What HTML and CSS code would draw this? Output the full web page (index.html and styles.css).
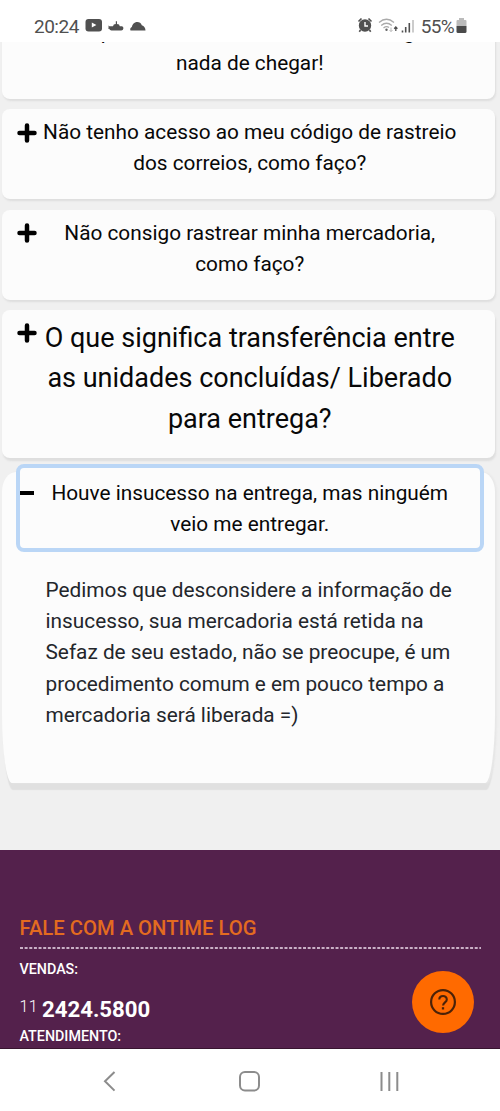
FILE: index.html
```html
<!DOCTYPE html>
<html lang="pt-BR">
<head>
<meta charset="utf-8">
<title>Ontime Log</title>
<link rel="stylesheet" href="styles.css">
</head>
<body>
<div class="phone">
  <header class="status">
    <span class="clock">20:24</span>
    <svg class="s-left" width="62" height="16" viewBox="0 0 62 16" fill="#505050">
      <rect x="0.5" y="2" width="16.5" height="12.5" rx="3"/>
      <path d="M6.800 5.400v5.200l4.600-2.600z" fill="#fff"/>
      <path d="M23 8.500l1.500.8h3.500l.8-1.800 2-.5V4.200h1.200V7l2 .5.8 1.800h2.200q1.600.2 1.400 2.200-.3 1.900-2.200 1.900H26.500q-1.800 0-2.300-1.600l-1.200-.3.800-1.500z"/>
      <path d="M45.500 13.500q-1-2.400 1.300-3.500.8-4 4.500-5 4-.6 5.500 3.200 3.600 1.200 3.700 5.300z"/>
    </svg>
    <span class="grow"></span>
    <svg class="s-right" width="58" height="18" viewBox="0 0 58 18" fill="none">
      <circle cx="8" cy="9.500" r="4.700" stroke="#505050" stroke-width="3" fill="#505050"/>
      <path d="M8 6v4h3" stroke="#fff" stroke-width="1.400"/>
      <path d="M1.500 5.500l3-3M14.500 5.500l-3-3M3.500 14l-1.200 1.800M12.500 14l1.200 1.800" stroke="#505050" stroke-width="1.600"/>
      <path d="M22 6.500q7.500-6.500 15 0M24.200 9.500q5.300-4.500 10.600 0M26.500 12q3-2.400 5.500-.4" stroke="#aaa" stroke-width="1.300"/>
      <circle cx="29.500" cy="13.800" r="1.200" fill="#666"/>
      <path d="M34 11.500v4M32.500 14l1.500 1.600 1.500-1.600" stroke="#bbb"/>
      <path d="M38.800 15v-4M37.200 12.800l1.600-1.800 1.600 1.800" stroke="#505050" stroke-width="1.300"/>
      <path d="M45.500 16.500v-2M48.700 16.500v-5.500M52.300 16.500v-9.500" stroke="#505050" stroke-width="1.600"/>
      <path d="M56 16.500v-12.500" stroke="#bbb" stroke-width="1.500"/>
    </svg>
    <span class="pct">55%</span>
    <svg class="batt" width="11" height="16" viewBox="0 0 11 16">
      <path d="M3 0h5v2h1.500q1 0 1 1.200V8H.5V3.200Q.5 2 1.500 2H3z" fill="#bbb"/>
      <path d="M.5 8h10v5.500q0 1.500-1.500 1.500H2Q.5 15 .5 13.500z" fill="#4a4a4a"/>
    </svg>
  </header>

  <main class="page">
    <section class="card first">
      <svg class="sign" viewBox="0 0 20 20"><path d="M10 2.500v15M2.500 10h15"/></svg>
      <h2 class="q">Comprei e minha mercadoria não chega e<br>nada de chegar!</h2>
    </section>
    <section class="card">
      <svg class="sign" viewBox="0 0 20 20"><path d="M10 2.500v15M2.500 10h15"/></svg>
      <h2 class="q">Não tenho acesso ao meu código de rastreio<br>dos correios, como faço?</h2>
    </section>
    <section class="card">
      <svg class="sign" viewBox="0 0 20 20"><path d="M10 2.500v15M2.500 10h15"/></svg>
      <h2 class="q">Não consigo rastrear minha mercadoria,<br>como faço?</h2>
    </section>
    <section class="card large">
      <svg class="sign" viewBox="0 0 20 20"><path d="M10 2.500v15M2.500 10h15"/></svg>
      <h2 class="q">O que significa transferência entre<br>as unidades concluídas/ Liberado<br>para entrega?</h2>
    </section>
    <section class="card open">
      <div class="focus">
        <svg class="minus" viewBox="0 0 14 4"><path d="M0 0h14v4H0z"/></svg>
        <h2 class="q">Houve insucesso na entrega, mas ninguém<br>veio me entregar.</h2>
      </div>
      <p class="answer">Pedimos que desconsidere a informação de<br>insucesso, sua mercadoria está retida na<br>Sefaz de seu estado, não se preocupe, é um<br>procedimento comum e em pouco tempo a<br>mercadoria será liberada =)</p>
    </section>
  </main>

  <footer class="contact">
    <h3 class="title">FALE COM A ONTIME LOG</h3>
    <svg class="dash" viewBox="0 0 461 2"><path d="M0 1h461"/></svg>
    <div class="label">VENDAS:</div>
    <div class="tel"><span class="ddd">11</span><b class="num">2424.5800</b></div>
    <div class="label">ATENDIMENTO:</div>
    <button class="help" aria-label="Ajuda">
      <svg width="28" height="28" viewBox="0 0 28 28" fill="none" stroke="#4b2208">
        <circle cx="14" cy="14" r="11.900" stroke-width="2.200"/>
        <path d="M10.300 11.600c0-4.800 7.500-4.700 7.500-.2 0 2.900-3.700 3-3.700 6.100" stroke-width="2.100"/>
        <path d="M14 19.200v2.300" stroke-width="2.300"/>
      </svg>
    </button>
  </footer>

  <nav class="nav">
    <svg width="300" height="24" viewBox="0 0 300 24" fill="none" stroke="#8c8c8c" stroke-width="2">
      <path d="M14.500 3l-9.500 9.300 9.500 9.300"/>
      <rect x="140" y="3" width="19" height="18.500" rx="5"/>
      <path d="M281.500 3v19M289.300 3v19M297.300 3v19"/>
    </svg>
  </nav>
</div>
</body>
</html>
```
FILE: styles.css
```css
* { box-sizing: border-box; }
body {
  margin: 0;
  background: #f0f0f0;
  font-family: Roboto, "Liberation Sans", sans-serif;
}
.phone {
  width: 500px;
  height: 1111px;
  display: flex;
  flex-direction: column;
  overflow: hidden;
}
.status {
  height: 42px;
  flex: none;
  background: #fff;
  display: flex;
  align-items: flex-start;
  padding: 15px 33px 0 34px;
  color: #505050;
  font-size: 19px;
  line-height: 23px;
}
.clock { width: 51px; letter-spacing: -0.5px; }
.s-left { margin-top: 2px; }
.grow { flex: 1; }
.s-right { margin-top: 1px; margin-right: 6px; }
.pct { letter-spacing: -0.7px; margin-right: 2px; }
.batt { margin-top: 3px; }

.page {
  flex: none;
  height: 807.500px;
  padding: 0 5.500px 0 2px;
  overflow: hidden;
}
.card {
  display: flex;
  align-items: flex-start;
  height: 90px;
  margin-bottom: 10.500px;
  padding: 8px 0 0 15px;
  background: #fcfcfc;
  border-radius: 8px;
  box-shadow: 1px 2px 2px #dedede;
}
.first {
  height: 91px;
  margin-top: -34.500px;
  padding-top: 9px;
}
.sign {
  width: 20px;
  height: 20px;
  flex: none;
  margin-top: 5.500px;
  fill: none;
  stroke: #000;
  stroke-width: 4.500;
  stroke-linecap: round;
}
.first .sign { margin-top: 5px; }
.q {
  flex: 1;
  margin: 0 37px 0 5px;
  font-size: 20.800px;
  line-height: 31.200px;
  font-weight: 400;
  text-align: center;
  white-space: nowrap;
  color: #080808;
}
.large {
  height: 148px;
  padding-top: 7.500px;
  box-shadow: 1px 3px 2px #dedede;
}
.large .q {
  font-size: 27px;
  line-height: 40.500px;
}
.open {
  display: block;
  height: 311px;
  margin: 14px 0 0;
  padding: 0 11px 0 14px;
  border-radius: 14px 14px 10px 10px / 20px 20px 70px 70px;
  box-shadow: 2px 0 2px #e8e8e8, 1px 7px 1px #e0e0e0;
}
.focus {
  position: relative;
  top: -8px;
  height: 88px;
  display: flex;
  border: 4px solid #bad6f6;
  border-radius: 8px;
  background: #fcfcfc;
  padding-top: 9.500px;
}
.minus { width: 14px; height: 4px; margin-top: 13.500px; flex: none; }
.focus .q { margin: 0 30px 0 16px; }
.answer {
  margin: 14.800px 0 0 29.500px;
  font-size: 20.800px;
  line-height: 31.300px;
  white-space: nowrap;
  color: #23262b;
}
.contact {
  position: relative;
  flex: none;
  height: 199px;
  background: #54214c;
  border-bottom: 1px solid #38142f;
  padding: 66px 19px 0 19.500px;
  color: #fff;
}
.title {
  margin: 0;
  font-size: 20.250px;
  line-height: 24px;
  font-weight: 500;
  color: #e36b20;
}
.dash { display: block; width: 461px; height: 2px; margin-top: 7px; }
.dash path { stroke: #efdfee; stroke-width: 1.400; stroke-dasharray: 3 1.640; }
.label {
  font-size: 14.300px;
  line-height: 18px;
  font-weight: 500;
  margin-top: 11px;
}
.tel { display: flex; height: 26px; margin-top: 17px; }
.tel + .label { margin-top: 6px; }
.ddd { width: 22.500px; font-size: 16px; line-height: 24px; font-weight: 300; letter-spacing: 0.3px; }
.num { font-size: 22.200px; line-height: 28px; font-weight: 700; }
.help {
  position: absolute;
  left: 411.500px;
  top: 121px;
  width: 62.500px;
  height: 62.500px;
  padding: 0;
  border: 0;
  border-radius: 50%;
  background: #ff6a00;
  display: grid;
  place-items: center;
}
.nav {
  flex: 1;
  background: #fff;
  display: flex;
  justify-content: center;
  padding-top: 20px;
}
```
